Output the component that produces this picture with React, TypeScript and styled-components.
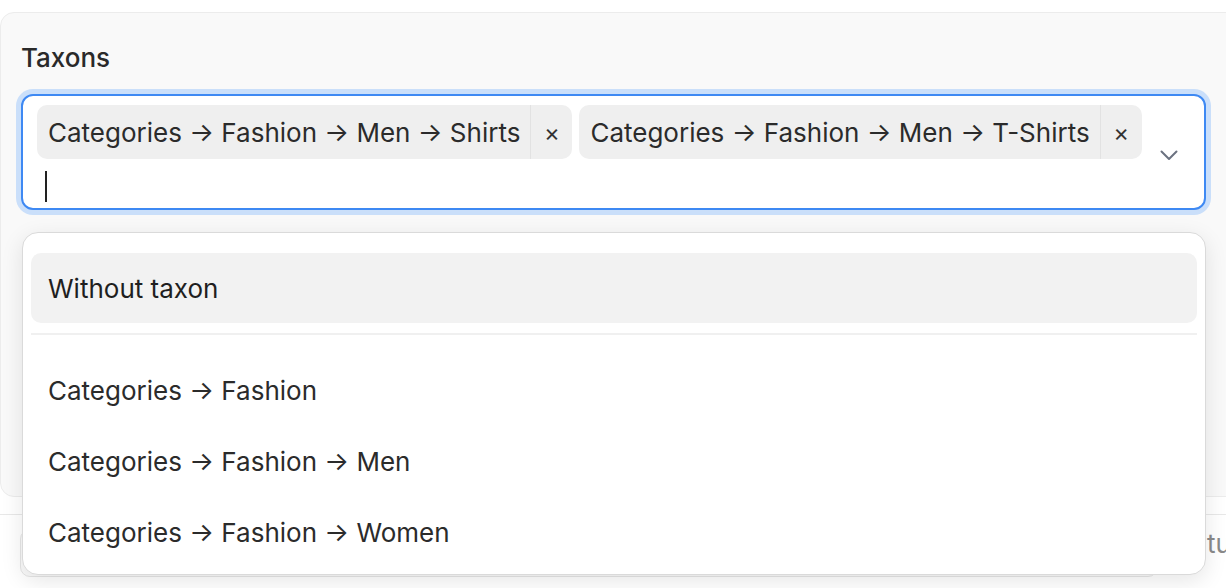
import styled, { createGlobalStyle } from "styled-components";

const GlobalStyle = createGlobalStyle`
  html, body {
    margin: 0;
    padding: 0;
    background: #ffffff;
    overflow: hidden;
  }
  body {
    font-family: Inter, "Noto Sans", sans-serif;
    color: #262626;
    -webkit-font-smoothing: antialiased;
  }
`;

const selected = [
  "Categories → Fashion → Men → Shirts",
  "Categories → Fashion → Men → T-Shirts",
];

const options = [
  "Categories → Fashion",
  "Categories → Fashion → Men",
  "Categories → Fashion → Women",
];

const ChevronDown = () => (
  <svg width="18" height="11" viewBox="0 0 18 11" fill="none">
    <polyline
      points="1.5,1.5 9,9 16.5,1.5"
      stroke="#6b7280"
      strokeWidth="2"
      strokeLinecap="round"
      strokeLinejoin="round"
    />
  </svg>
);

const App = () => {
  return (
    <Page>
      <GlobalStyle />
      <Card>
        <Label>Taxons</Label>
        <Field>
          <Control>
            <Values>
              {selected.map((name) => (
                <Chip key={name}>
                  <ChipLabel>{name}</ChipLabel>
                  <ChipRemove>×</ChipRemove>
                </Chip>
              ))}
              <InputRow>
                <Caret />
              </InputRow>
            </Values>
            <Indicator>
              <ChevronDown />
            </Indicator>
          </Control>

          <Menu>
            <Option $active>Without taxon</Option>
            <MenuDivider />
            {options.map((o) => (
              <Option key={o}>{o}</Option>
            ))}
          </Menu>
        </Field>
      </Card>

      <NextSection>
        <NextRow>
          <NextBox />
          <NextLabel>Status</NextLabel>
        </NextRow>
      </NextSection>
    </Page>
  );
};

export default App;

const Page = styled.div`
  width: 1226px;
  height: 588px;
  padding-top: 12px;
  box-sizing: border-box;
  overflow: hidden;
`;

const Card = styled.section`
  box-sizing: border-box;
  width: 1260px;
  height: 485px;
  background: #f9f9f9;
  border: 1px solid #ececec;
  border-radius: 14px;
  padding: 30px 0 0 20px;
`;

const Label = styled.div`
  font-size: 26px;
  line-height: 30px;
  font-weight: 500;
  color: #2a2a2a;
  margin-bottom: 21px;
`;

const Field = styled.div`
  position: relative;
  width: 1185px;
`;

const Control = styled.div`
  box-sizing: border-box;
  display: flex;
  align-items: center;
  min-height: 116px;
  padding: 9px 0 2px 14px;
  background: #ffffff;
  border: 2px solid #3e89f3;
  border-radius: 12px;
  box-shadow: 0 0 0 5px #cadffa;
`;

const Values = styled.div`
  flex: 1;
  min-width: 0;
  display: flex;
  flex-wrap: wrap;
  gap: 7px;
`;

const Chip = styled.div`
  display: flex;
  align-items: stretch;
  flex-shrink: 0;
  height: 54px;
  background: #efefef;
  border-radius: 10px;
  overflow: hidden;
`;

const ChipLabel = styled.span`
  display: flex;
  align-items: center;
  padding: 0 10px 0 11px;
  font-size: 26px;
  color: #2b2b2b;
  white-space: nowrap;
`;

const ChipRemove = styled.span`
  display: flex;
  align-items: center;
  justify-content: center;
  width: 41px;
  border-left: 1px solid #e2e2e2;
  font-size: 24px;
  color: #333333;
`;

const InputRow = styled.div`
  flex-basis: 100%;
  height: 40px;
  display: flex;
  align-items: center;
  padding-left: 8px;
`;

const Caret = styled.span`
  width: 2px;
  height: 31px;
  background: #222222;
`;

const Indicator = styled.div`
  display: flex;
  align-items: center;
  flex-shrink: 0;
  padding: 0 26px 0 0;
`;

const Menu = styled.div`
  position: absolute;
  top: calc(100% + 22px);
  left: 1px;
  right: 0;
  box-sizing: border-box;
  padding: 20px 8px 6px;
  background: #ffffff;
  border: 1px solid #dadada;
  border-radius: 16px;
  box-shadow: 0 6px 22px rgba(0, 0, 0, 0.1);
  z-index: 10;
`;

const Option = styled.div<{ $active?: boolean }>`
  display: flex;
  align-items: center;
  height: ${(p) => (p.$active ? "70px" : "71px")};
  padding-left: 17px;
  border-radius: 10px;
  background: ${(p) => (p.$active ? "#f2f2f2" : "transparent")};
  font-size: 26px;
  color: ${(p) => (p.$active ? "#1f1f1f" : "#2b2b2b")};
`;

const MenuDivider = styled.div`
  height: 2px;
  background: #f0f0f0;
  margin: 10px 0 20px;
`;

const NextSection = styled.div`
  margin-top: 17px;
  border-top: 1px solid #e8e8e8;
  padding: 14px 0 0 20px;
`;

const NextRow = styled.div`
  display: flex;
  align-items: flex-start;
  gap: 9px;
  white-space: nowrap;
`;

const NextBox = styled.div`
  width: 1136px;
  height: 46px;
  flex-shrink: 0;
  border: 1px solid #e6e6e6;
  border-radius: 10px;
  background: #fafafa;
`;

const NextLabel = styled.span`
  font-size: 26px;
  line-height: 30px;
  color: #8a8a8a;
`;
